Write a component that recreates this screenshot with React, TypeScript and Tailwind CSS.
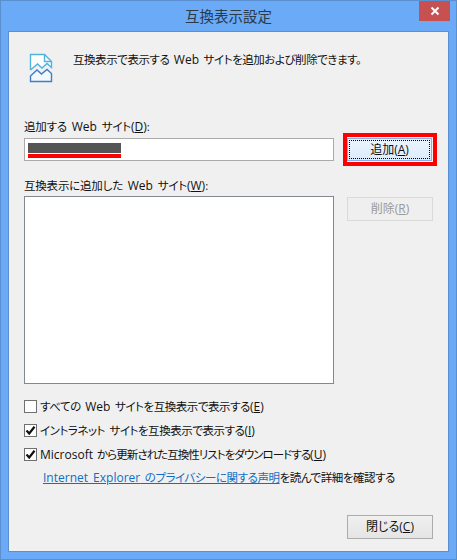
import React from 'react';

const FONT = "font-['Open_Sans','Noto_Sans_CJK_JP',sans-serif] [font-feature-settings:'palt']";

// latin runs are a bit larger than the japanese text next to them
function L({ children }: { children: string }) {
  return <span className="text-[12px] tracking-normal">{children}</span>;
}

function Key({ children }: { children: string }) {
  return (
    <span className="text-[12px] tracking-normal">
      (<span className="underline underline-offset-1">{children}</span>)
    </span>
  );
}

function PageIcon() {
  return (
    <svg width="24" height="30" viewBox="0 0 24 30" fill="none" className="shrink-0">
      <path d="M1.500 14V1.500H15L22 8V14L18 10.500L13 15L8.500 11L1.500 17Z" fill="#fff" />
      <path d="M1.500 28.500V23L8 17L12.500 21L18 16.500L22.500 20.500V28.500Z" fill="#f3f8fd" />
      <path d="M1.500 17V1.500H15.500L22.500 8.500V14.500L18 10.500L13 15L8.500 11L1.500 17" stroke="#4fb3de" strokeWidth="1.400" />
      <path d="M15.500 1.500V8.500H22.500" stroke="#4fb3de" strokeWidth="1.400" />
      <path d="M1.500 28.500V23L8 17L12.500 21L18 16.500L22.500 20.500V28.500Z" stroke="#3d7fc6" strokeWidth="1.400" />
    </svg>
  );
}

function CheckRow({ checked, children }: { checked?: boolean; children: React.ReactNode }) {
  return (
    <div className="flex items-center h-[13px] gap-[3px]">
      <span className="w-[13px] h-[13px] border border-[#707070] bg-white flex items-center justify-center shrink-0">
        {checked && (
          <svg width="11" height="11" viewBox="0 0 11 11">
            <path d="M1.500 5.500L4.200 8.500L9.500 1.800" stroke="#111" strokeWidth="2.200" fill="none" />
          </svg>
        )}
      </span>
      <span className="whitespace-nowrap">{children}</span>
    </div>
  );
}

export default function App() {
  return (
    <div className={`${FONT} w-[457px] h-[560px] bg-[#6aaaf6] border border-[#5b8fd0] flex flex-col text-[11.500px] tracking-[-0.45px] [word-spacing:2px] leading-[16px] text-[#111] overflow-hidden`}>
      {/* Title bar */}
      <div className="h-[30px] relative flex items-center justify-center shrink-0">
        <span className="text-[14.500px] tracking-normal text-[#2c3a48] mt-[2px] [font-feature-settings:normal]">互換表示設定</span>
        <button className="absolute top-0 right-[6px] w-[31px] h-[20px] bg-[#c75050] text-white flex items-center justify-center">
          <svg width="10" height="10" viewBox="0 0 10 10">
            <path d="M1.500 1.500L8.500 8.500M8.500 1.500L1.500 8.500" stroke="#fff" strokeWidth="2" />
          </svg>
        </button>
      </div>

      {/* Dialog body */}
      <div className="relative mx-[7px] h-[521px] bg-[#f0f0f0] border border-[#5b8fd0] pl-[15px] pr-[15px] flex flex-col shrink-0">
        <div className="flex items-start mt-[21px] ml-[5px] gap-[20px]">
          <PageIcon />
          <span className="mt-[-1px] whitespace-nowrap">互換表示で表示する <L>Web</L> サイトを追加および削除できます。</span>
        </div>

        <div className="mt-[36px] h-[16px] whitespace-nowrap tracking-[-0.2px]">
          追加する <L>Web</L> サイト<Key>D</Key>:
        </div>
        <div className="mt-[3px] flex justify-between">
          <div className="w-[310px] h-[23px] bg-white border border-[#ababab] px-[3px] pt-[4px]">
            <div className="w-[93px] h-[10px] bg-[#555555]" />
            <div className="w-[93px] h-[4px] mt-px bg-[#ff0000]" />
          </div>
          <button className="w-[85px] h-[23px] mr-[1px] border border-[#7eb4ea] bg-gradient-to-b from-[#ecf4fc] to-[#dcecfc] relative text-[12px] tracking-normal">
            <span className="absolute inset-[1px] border border-dotted border-black flex items-center justify-center">
              追加<Key>A</Key>
            </span>
          </button>
        </div>

        <div className="mt-[17px] h-[16px] whitespace-nowrap tracking-[-0.2px]">
          互換表示に追加した <L>Web</L> サイト<Key>W</Key>:
        </div>
        <div className="mt-[2px] flex justify-between items-start">
          <div className="w-[310px] h-[188px] bg-white border border-[#828790]" />
          <button className="w-[86px] h-[24px] mt-px border border-[#d9d9d9] bg-[#efefef] text-[#9a9a9a] text-[12px] tracking-normal flex items-center justify-center">
            削除<Key>R</Key>
          </button>
        </div>

        <div className="mt-[16px] flex flex-col gap-[11px]">
          <CheckRow>すべての <L>Web</L> サイトを互換表示で表示する<Key>E</Key></CheckRow>
          <CheckRow checked>イントラネット サイトを互換表示で表示する<Key>I</Key></CheckRow>
          <CheckRow checked>
            <span className="tracking-[-0.95px]"><L>Microsoft</L> から更新された互換性リストをダウンロードする</span><Key>U</Key>
          </CheckRow>
        </div>

        <div className="mt-[9px] ml-[19px] h-[16px] whitespace-nowrap">
          <a className="text-[#0f6fc6] underline underline-offset-1"><L>Internet Explorer</L> のプライバシーに関する声明</a>を読んで詳細を確認する
        </div>

        <div className="mt-[29px] flex justify-end">
          <button className="w-[86px] h-[24px] border border-[#acacac] bg-gradient-to-b from-[#f0f0f0] to-[#e5e5e5] text-[12px] tracking-normal flex items-center justify-center">
            閉じる<Key>C</Key>
          </button>
        </div>

        {/* red annotation around the add button */}
        <div className="absolute left-[334px] top-[101px] w-[94px] h-[33px] border-[4px] border-[#ff0000] pointer-events-none" />
      </div>
    </div>
  );
}
